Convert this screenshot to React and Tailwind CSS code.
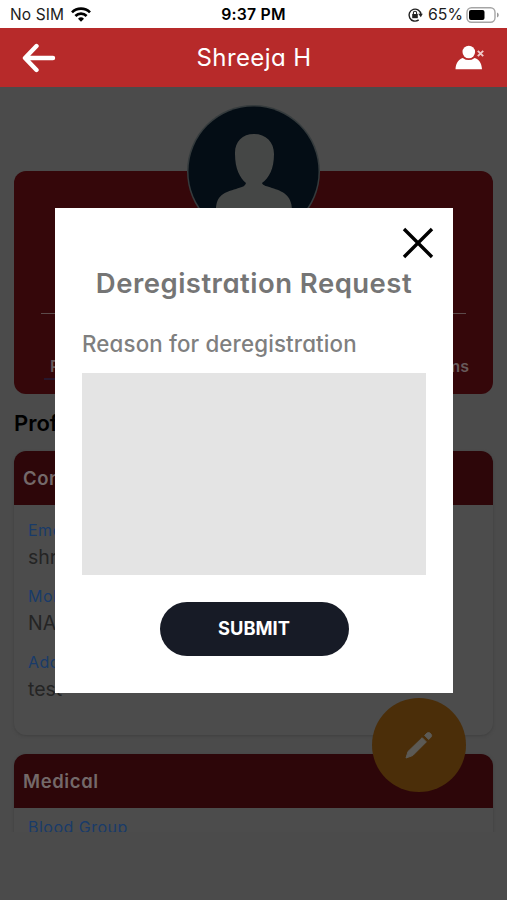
import React from "react";

function StatusBar() {
  return (
    <div className="flex h-7 items-center bg-white pt-px text-[16px] text-[#1c1c1c]">
      <div className="flex w-[200px] items-center gap-[7px] pl-[10px]">
        <span className="text-[15.5px] tracking-[0.1px]">No SIM</span>
        <svg width="20" height="15" viewBox="0 0 20 15" fill="none" stroke="#000" strokeWidth="2.7">
          <path d="M1 5.4a12.8 12.8 0 0 1 18 0" />
          <path d="M4.4 9a8 8 0 0 1 11.2 0" />
          <path d="M7 11.7a4.3 4.3 0 0 1 6 0L10 14.7z" fill="#000" stroke="none" />
        </svg>
      </div>
      <div className="w-[107px] pt-px text-center text-[15.8px] font-semibold tracking-[0.2px] whitespace-nowrap text-black">9:37 PM</div>
      <div className="flex w-[200px] items-center pl-[100px]">
        <svg width="16" height="16" viewBox="0 0 16 16" fill="none" stroke="#222" strokeWidth="1.4">
          <path d="M11.7 12.9a6 6 0 1 1 2.3-5.4" />
          <path d="M11.2 6.8h4.6L13.8 10.2z" fill="#222" stroke="none" />
          <rect x="5.2" y="7" width="5.6" height="4.2" fill="#222" stroke="none" />
          <path d="M6.4 7.2V5.8a1.6 1.6 0 0 1 3.2 0v1.4" strokeWidth="1.1" />
        </svg>
        <span className="ml-[5px] w-[38px] text-[15.8px] whitespace-nowrap">65%</span>
        <svg className="shrink-0" width="34" height="16" viewBox="0 0 34 16">
          <rect x="1" y=".7" width="28" height="14.6" rx="4.5" fill="#fff" stroke="#a5a5a5" strokeWidth="1.4" />
          <rect x="3" y="3" width="15.5" height="10" rx="2" fill="#000" />
          <path d="M31 5.5v5q1.8-.8 1.8-2.5T31 5.5" fill="#999" />
        </svg>
      </div>
    </div>
  );
}

function Header() {
  return (
    <header className="flex h-[59px] items-center justify-between bg-[#b72a2a] pr-[20px] pl-[22px]">
      <svg width="34" height="30" viewBox="0 0 34 30" fill="none" stroke="#fff" strokeWidth="4.4" strokeLinecap="round" strokeLinejoin="round">
        <path d="M14.5 3 3 15l11.5 12M3.5 15H31" />
      </svg>
      <h1 className="mr-[3px] text-[24px] font-normal tracking-[0.4px] text-white">Shreeja H</h1>
      <svg width="32" height="26" viewBox="0 0 32 26" fill="#fff">
        <circle cx="13.8" cy="7" r="6.3" />
        <path d="M.5 24.3C.8 17.4 4.3 14 7.7 12.9Q13.8 17.3 19.6 12.9C23.5 14 26.6 17.4 27 24.3z" />
        <path d="m22.8 5.8 5.4 5.4m0-5.4-5.4 5.4" stroke="#f0caca" strokeWidth="1.9" />
      </svg>
    </header>
  );
}

function Avatar() {
  return (
    <svg className="absolute top-[-67px] left-[172px]" width="135" height="135" viewBox="0 0 135 135">
      <defs>
        <clipPath id="avatar-disc">
          <circle cx="67.5" cy="67.5" r="65" />
        </clipPath>
      </defs>
      <circle cx="67.5" cy="67.5" r="66.5" fill="#353b3d" />
      <g clipPath="url(#avatar-disc)">
        <rect width="135" height="135" fill="#040d15" />
        <path
          d="M68 30C56 30 48.500 38 49 50c0 15 5 24 11 29-1 4-5 4-10 6-11 3-20 6-20 21v29h76v-29C106 91 96 87 86 84c-5-2-9-2-10-5 7-5 12-14 12-29 0-12-8-20-20-20"
          fill="#454746"
        />
      </g>
    </svg>
  );
}

function ProfileCard() {
  return (
    <section className="relative mt-[84px] h-[223px] rounded-[12px] bg-[#35070a] px-[27px] pt-[142px]">
      <Avatar />
      <div className="h-px bg-[#5c4a4a]" />
      <div className="mt-[41px] flex justify-between">
        <div className="ml-[3px] border-b-2 border-[#28172c] pl-[6px] text-[16px] leading-[23px] font-semibold text-[#66595a]">Profile</div>
        <div className="mr-[-3px] text-[16px] leading-[23px] font-semibold text-[#66595a]">Programs</div>
      </div>
    </section>
  );
}

function CardHeading({ children }) {
  return (
    <h3 className="flex h-[54px] items-center rounded-t-[12px] bg-[#2d0609] pt-px pl-[9px] text-[18.5px] font-semibold tracking-[0.6px] text-[#746969]">
      {children}
    </h3>
  );
}

function Field({ label, value }) {
  return (
    <div className="h-[66px] pl-[14px]">
      <div className="h-[26px] text-[16px] leading-[25px] tracking-[0.5px] text-[#193b69]">{label}</div>
      {value && <div className="text-[19.5px] leading-[27px] text-[#242424]">{value}</div>}
    </div>
  );
}

function EditButton() {
  return (
    <button className="absolute top-[698px] left-[372px] flex size-[94px] items-center justify-center rounded-full bg-[#4b2e09]">
      <svg width="30" height="30" viewBox="0 0 30 30" fill="#5c5a55" stroke="#5c5a55" strokeLinejoin="round">
        <path d="M2 28 4 21.500 18.200 7.700l4.200 4.200L8.800 25.500z" />
        <path d="m20.600 5.400 2.400-2.300q1.500-1.200 3 0l1 1q1.300 1.500 0 3L24.700 9.500z" />
      </svg>
    </button>
  );
}

function DeregistrationModal() {
  return (
    <div
      role="dialog"
      className="absolute top-[208px] left-[55px] flex h-[485px] w-[398px] flex-col items-center bg-white px-[27px] pt-[19px]"
    >
      <button className="mr-[-8px] self-end">
        <svg width="32" height="32" viewBox="0 0 32 32" fill="none" stroke="#000" strokeWidth="3.4">
          <path d="m2 2 28 28M30 2 2 30" />
        </svg>
      </button>
      <h2 className="mt-[7px] text-[27.5px] leading-[34px] font-semibold tracking-[0.48px] whitespace-nowrap text-[#757575]">
        Deregistration Request
      </h2>
      <label className="mt-[29px] self-start text-[22.3px] leading-[30px] font-medium tracking-[0.15px] whitespace-nowrap text-[#7f7f7f]">
        Reason for deregistration
      </label>
      <div className="mt-[14px] h-[202px] w-[344px] shrink-0 bg-[#e4e4e4]" />
      <button className="mt-[27px] h-[54px] w-[189px] shrink-0 rounded-full bg-[#171b26] text-[18.3px] font-bold text-white">
        SUBMIT
      </button>
    </div>
  );
}

export default function App() {
  return (
    <div className="relative h-[900px] w-[507px] overflow-hidden bg-[#4b4b4b] font-[Inter,sans-serif] [font-feature-settings:'cv11']">
      <StatusBar />
      <Header />
      <main className="h-[745px] overflow-hidden px-[14px]">
        <ProfileCard />
        <h2 className="mt-[13px] h-[44px] text-[22px] leading-[32px] font-semibold text-black">Profile</h2>
        <section className="h-[284px] rounded-[12px] bg-[#4c4c4c] shadow-[0_1px_3px_#404040]">
          <CardHeading>Contact</CardHeading>
          <div className="pt-[13px]">
            <Field label="Email" value="shreeja" />
            <Field label="Mobile" value="NA" />
            <Field label="Address" value="test" />
          </div>
        </section>
        <section className="mt-[19px] h-[150px] rounded-[12px] bg-[#4c4c4c] shadow-[0_1px_3px_#404040]">
          <CardHeading>Medical</CardHeading>
          <div className="pt-[7px]">
            <Field label="Blood Group" />
          </div>
        </section>
      </main>
      <EditButton />
      <DeregistrationModal />
    </div>
  );
}
